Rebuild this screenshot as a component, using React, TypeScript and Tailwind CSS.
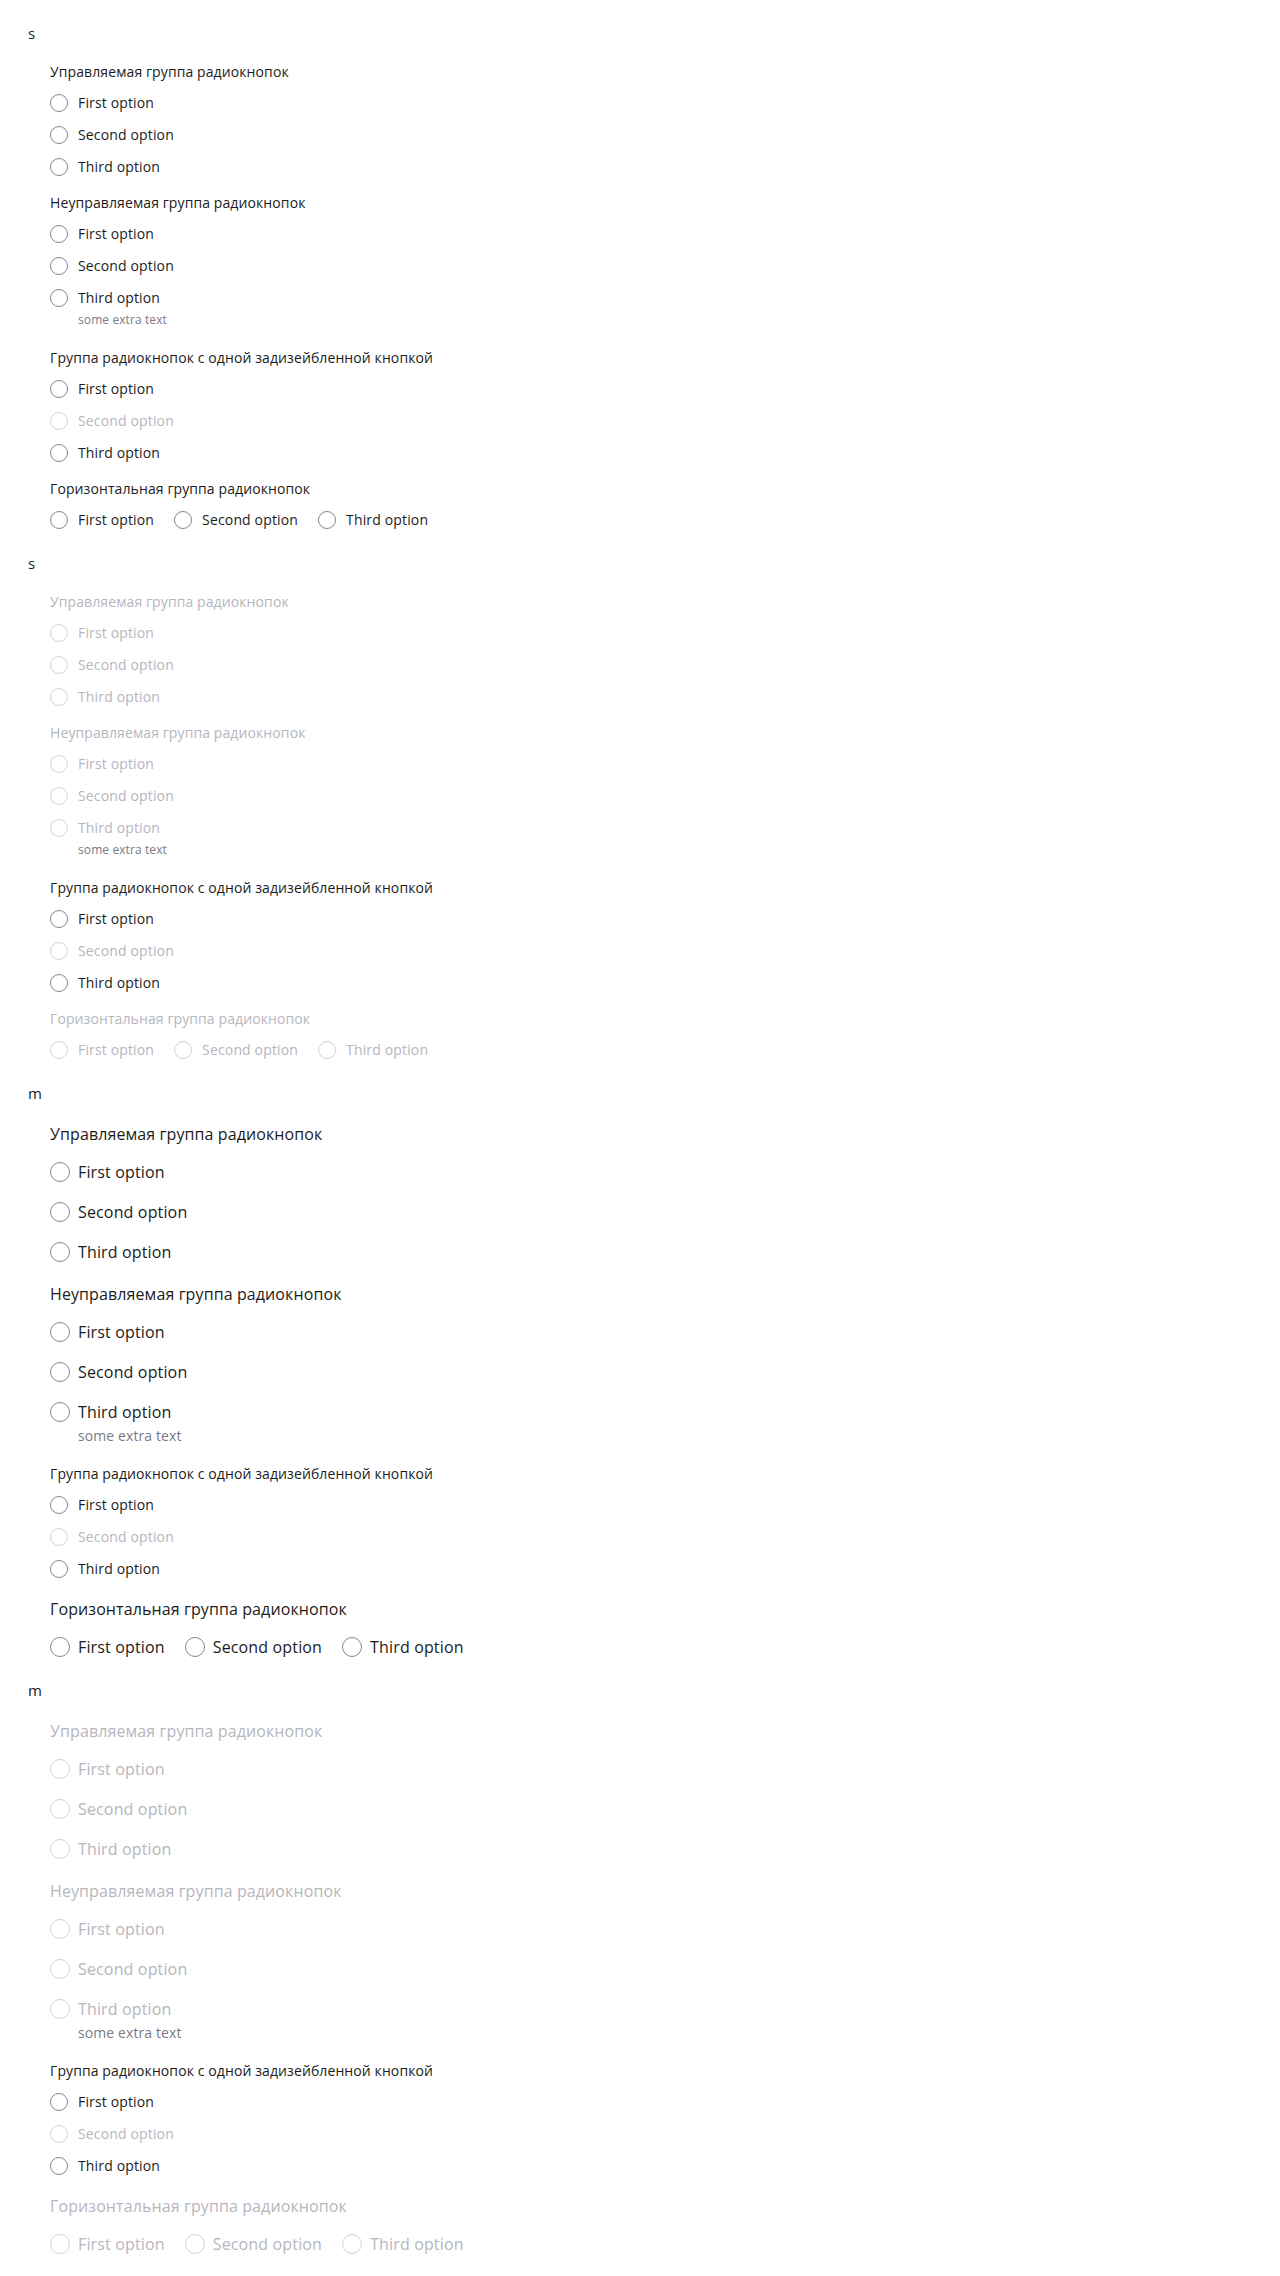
import React from 'react';

type Size = 's' | 'm';

const OPTIONS = ['First option', 'Second option', 'Third option'];

const sizeStyles = {
  s: {
    label: 'text-[14px] leading-5 mb-[5px] tracking-[0.1px]',
    row: 'h-8',
    text: 'text-[14px] leading-5 tracking-[0.15px]',
    radio: 'w-[18px] h-[18px] mr-[10px]',
    extra: 'text-[12px] leading-4 -mt-[2px] mb-[9px] tracking-[0.1px]',
  },
  m: {
    label: 'text-[16px] leading-6 mb-[6px] tracking-[0.1px]',
    row: 'h-10',
    text: 'text-[16px] leading-6 tracking-[0.15px]',
    radio: 'w-5 h-5 mr-2',
    extra: 'text-[14px] leading-4 -mt-1 mb-[9px] tracking-[0.1px]',
  },
};

interface RadioProps {
  name: string;
  label: string;
  size: Size;
  disabled?: boolean;
}

const Radio: React.FC<RadioProps> = ({ name, label, size, disabled }) => {
  const st = sizeStyles[size];
  return (
    <label className={`flex items-center ${st.row} ${disabled ? 'cursor-default' : 'cursor-pointer'}`}>
      <input
        type="radio"
        name={name}
        disabled={disabled}
        className={`appearance-none m-0 shrink-0 rounded-full border bg-white ${st.radio} ${
          disabled ? 'border-[#d2d2d7]' : 'border-[#86868e]'
        }`}
      />
      <span className={`${st.text} ${disabled ? 'text-[#b6b6be]' : 'text-[#1c1c20]'}`}>{label}</span>
    </label>
  );
};

interface GroupProps {
  name: string;
  title: string;
  size: Size;
  disabled?: boolean;
  disabledIndex?: number;
  extra?: boolean;
  horizontal?: boolean;
  className?: string;
}

const Group: React.FC<GroupProps> = ({ name, title, size, disabled, disabledIndex, extra, horizontal, className = '' }) => {
  const st = sizeStyles[size];
  return (
    <div className={`flex flex-col ${className}`}>
      <div className={`${st.label} ${disabled ? 'text-[#b6b6be]' : 'text-[#1c1c20]'}`}>{title}</div>
      <div className={horizontal ? 'flex gap-5' : 'flex flex-col'}>
        {OPTIONS.map((o, i) => (
          <Radio key={o} name={name} label={o} size={size} disabled={disabled || disabledIndex === i} />
        ))}
      </div>
      {extra && <div className={`${st.extra} pl-7 text-[#7a7a84]`}>some extra text</div>}
    </div>
  );
};

const Section: React.FC<{ size: Size; disabled?: boolean; id: string; className?: string }> = ({
  size,
  disabled,
  id,
  className = '',
}) => (
  <section className={`flex flex-col ${className}`}>
    <h3 className="text-[15px] leading-5 text-[#1a1a1a] mb-[19px]">{size}</h3>
    <div className="flex flex-col pl-[22px]">
      <Group name={`${id}-controlled`} title="Управляемая группа радиокнопок" size={size} disabled={disabled} />
      <Group
        name={`${id}-uncontrolled`}
        title="Неуправляемая группа радиокнопок"
        size={size}
        disabled={disabled}
        extra
        className="mt-[10px]"
      />
      {/* this one is always small */}
      <Group
        name={`${id}-one-disabled`}
        title="Группа радиокнопок с одной задизейбленной кнопкой"
        size="s"
        disabledIndex={1}
        className="mt-[11px]"
      />
      <Group
        name={`${id}-horizontal`}
        title="Горизонтальная группа радиокнопок"
        size={size}
        disabled={disabled}
        horizontal
        className={size === 'm' ? 'mt-[12px]' : 'mt-[10px]'}
      />
    </div>
  </section>
);

export default function App() {
  return (
    <div className="flex flex-col min-h-screen bg-white pl-[28px] pt-[23px] font-['Open_Sans',sans-serif]">
      <Section size="s" id="s1" className="mb-[17px]" />
      <Section size="s" id="s2" disabled className="mb-[17px]" />
      <Section size="m" id="m1" className="mb-[13px]" />
      <Section size="m" id="m2" disabled className="mb-[10px]" />
    </div>
  );
}
